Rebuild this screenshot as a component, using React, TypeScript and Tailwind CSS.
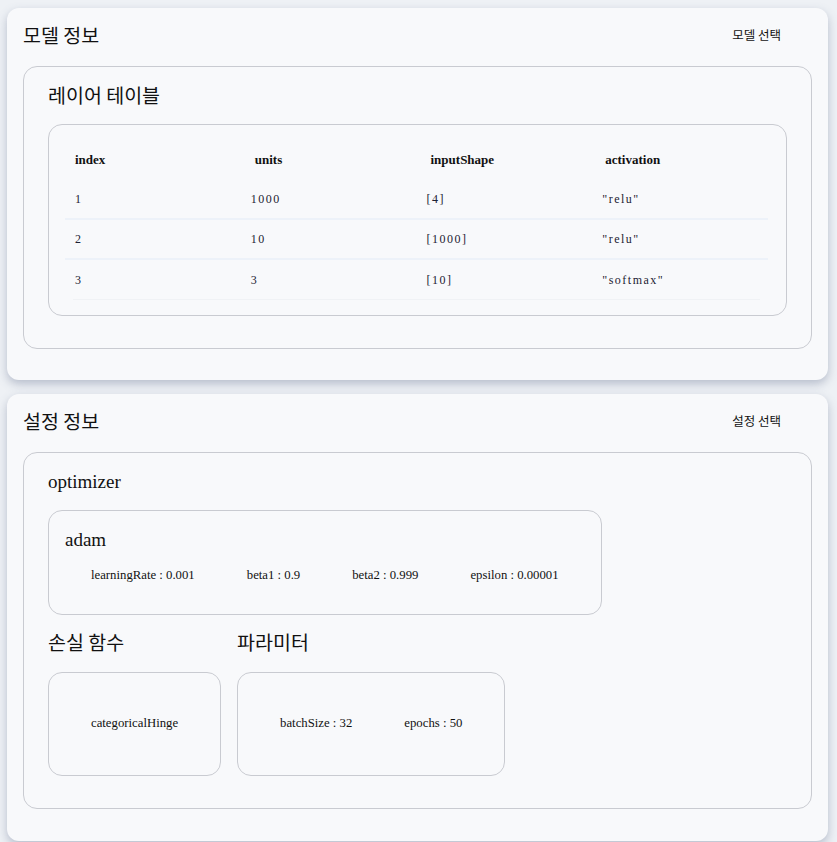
const serif = { fontFamily: '"Liberation Serif", "Noto Sans CJK KR", serif' }
const kr = { fontFamily: '"Noto Sans CJK KR", "Noto Sans", sans-serif' }

const layers = [
  { index: 1, units: 1000, inputShape: '[4]', activation: '"relu"' },
  { index: 2, units: 10, inputShape: '[1000]', activation: '"relu"' },
  { index: 3, units: 3, inputShape: '[10]', activation: '"softmax"' },
]

const adam = [
  'learningRate : 0.001',
  'beta1 : 0.9',
  'beta2 : 0.999',
  'epsilon : 0.00001',
]

function CardHeader({ title, action }: { title: string; action: string }) {
  return (
    <div className="flex h-[38px] items-center justify-between pr-[31px]">
      <h2 className="text-[19.5px] text-[#111]" style={kr}>
        {title}
      </h2>
      <button className="text-[12.5px] text-[#111]" style={kr}>
        {action}
      </button>
    </div>
  )
}

function LayerTable() {
  return (
    <div className="mt-[14px] rounded-[14px] border border-[#c9cbd1] pb-[15px] pl-4 pr-[18px] pt-[15px]">
      <div className="grid h-[40px] grid-cols-4 items-center text-[13px] font-bold text-[#111]" style={serif}>
        <div className="pl-[10px]">index</div>
        <div className="pl-[14px]">units</div>
        <div className="pl-[14px]">inputShape</div>
        <div className="pl-[13px]">activation</div>
      </div>
      {layers.map((l, i) => {
        const last = i === layers.length - 1
        return (
          <div key={l.index} className={last ? '' : 'border-b-2 border-[#edf2f9]'}>
            <div
              className={`grid grid-cols-4 items-center text-[12px] tracking-[1.5px] text-[#1c2233] ${last ? 'h-[39px]' : 'h-[38px]'}`}
              style={serif}
            >
              <div className="pl-[10px]">{l.index}</div>
              <div className="pl-[10px]">{l.units}</div>
              <div className="pl-[10px]">{l.inputShape}</div>
              <div className="pl-[10px]">{l.activation}</div>
            </div>
            {last && <div className="mx-2 border-b border-[#f0f2f5]" />}
          </div>
        )
      })}
    </div>
  )
}

export default function App() {
  return (
    <div className="min-h-screen bg-[#eef1f5] pb-2 pl-[7px] pr-[9px] pt-2">
      {/* 모델 정보 */}
      <section className="rounded-xl bg-[#f8f9fb] px-4 pb-[31px] pt-2 shadow-[0_4px_10px_rgba(80,95,130,0.35)]">
        <CardHeader title="모델 정보" action="모델 선택" />
        <div className="mt-3 rounded-[14px] border border-[#c9cbd1] px-6 pb-8 pt-[13px]">
          <h3 className="flex h-[30px] items-center text-[19.5px] text-[#111]" style={kr}>
            레이어 테이블
          </h3>
          <LayerTable />
        </div>
      </section>

      {/* 설정 정보 */}
      <section className="mt-[14px] rounded-xl bg-[#f8f9fb] px-4 pb-8 pt-2 shadow-[0_4px_10px_rgba(80,95,130,0.35)]">
        <CardHeader title="설정 정보" action="설정 선택" />
        <div className="mt-3 rounded-[14px] border border-[#c9cbd1] px-6 pb-8 pt-[14px]">
          <h3 className="flex h-[30px] items-center text-[19px] text-[#111]" style={serif}>
            optimizer
          </h3>
          <div className="mt-[13px] w-fit rounded-[14px] border border-[#c9cbd1] px-4 pb-[28px] pt-[14px]">
            <div className="flex h-[30px] items-center text-[19px] text-[#111]" style={serif}>
              adam
            </div>
            <div className="mt-[11px] flex h-[20px] items-center text-[12.75px] text-[#111]" style={serif}>
              {adam.map((p) => (
                <span key={p} className="mx-[26px]">
                  {p}
                </span>
              ))}
            </div>
          </div>

          <div className="mt-[12px] flex gap-4">
            <div>
              <h3 className="flex h-[30px] items-center text-[19.5px] text-[#111]" style={kr}>
                손실 함수
              </h3>
              <div className="mt-[15px] flex h-[104px] items-center rounded-[14px] border border-[#c9cbd1] px-4 text-[12.75px] text-[#111]" style={serif}>
                <span className="mx-[26px]">categoricalHinge</span>
              </div>
            </div>
            <div>
              <h3 className="flex h-[30px] items-center text-[19.5px] text-[#111]" style={kr}>
                파라미터
              </h3>
              <div className="mt-[15px] flex h-[104px] items-center rounded-[14px] border border-[#c9cbd1] px-4 text-[12.75px] text-[#111]" style={serif}>
                <span className="mx-[26px]">batchSize : 32</span>
                <span className="mx-[26px]">epochs : 50</span>
              </div>
            </div>
          </div>
        </div>
      </section>
    </div>
  )
}
